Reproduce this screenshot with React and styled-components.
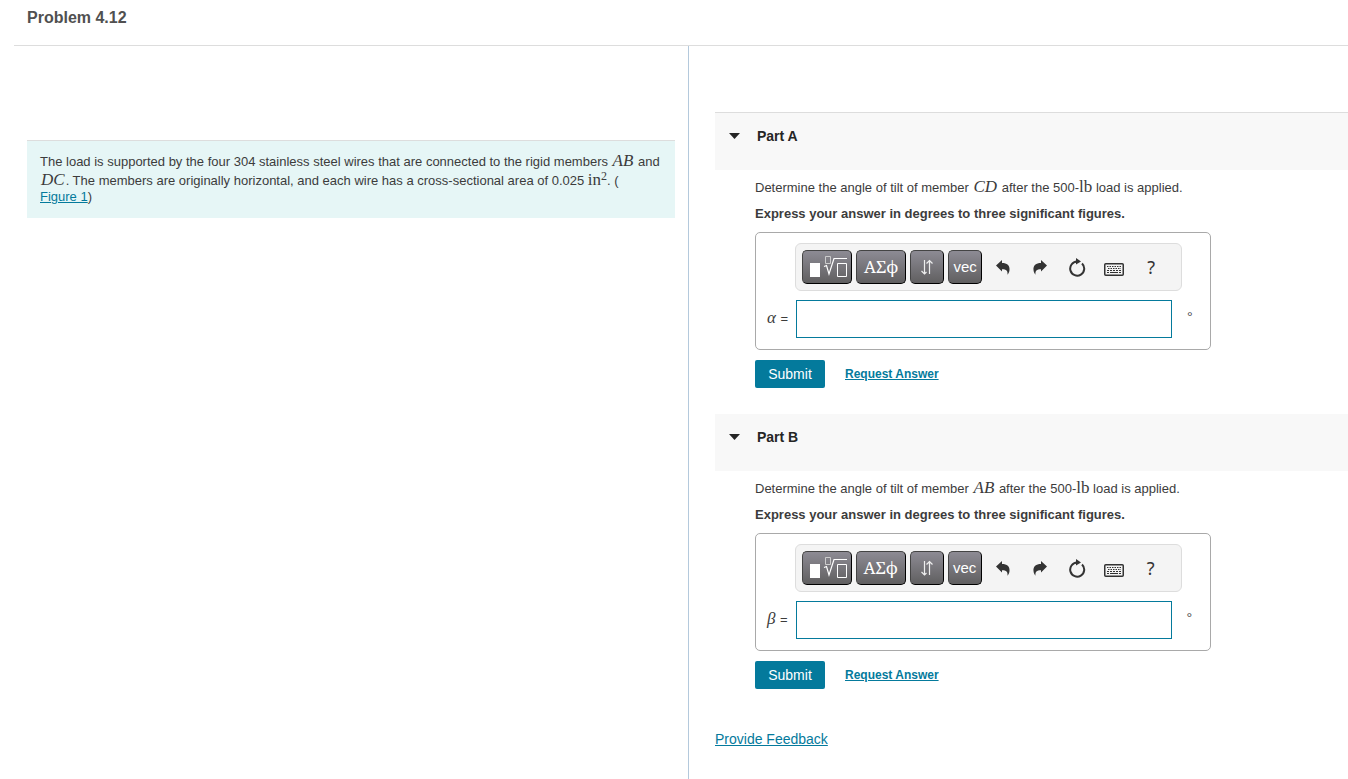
import React, { useState } from 'react';
import styled, { createGlobalStyle } from 'styled-components';

const GlobalStyle = createGlobalStyle`
  * {
    box-sizing: border-box;
  }
  body {
    margin: 0;
    background: #fff;
    color: #3c3c3c;
    font-family: "Liberation Sans", Arial, sans-serif;
    font-size: 13px;
    line-height: 16px;
  }
`;

const Page = styled.div`
  display: flex;
  flex-direction: column;
  min-height: 100vh;
`;

const Header = styled.header`
  margin-left: 14px;
  padding: 8px 13px 17px;
  border-bottom: 1px solid #ddd;
`;

const Title = styled.h1`
  margin: 0;
  color: #505050;
  font-size: 16px;
  line-height: 20px;
`;

const Columns = styled.main`
  flex: 1;
  display: grid;
  grid-template-columns: 689fr 659fr;
`;

const ProblemColumn = styled.section`
  padding: 94px 13px 0 27px;
  border-right: 1px solid #b4c9dc;
`;

const Statement = styled.p`
  margin: 0;
  padding: 10px 13px 13px;
  background: #e6f6f6;
  border-top: 1px solid #ddd;
`;

const AnswerColumn = styled.section`
  padding: 66px 0 20px 26px;
`;

const MathText = styled.span`
  padding: ${props => props.$upright ? '0' : '0 1px'};
  font-family: "Liberation Serif", "Times New Roman", serif;
  font-size: 17px;
  line-height: 19px;
  font-style: ${props => props.$upright ? 'normal' : 'italic'};

  sup {
    font-size: 12px;
    line-height: 0;
    vertical-align: 5px;
  }
`;

const TextLink = styled.a`
  color: #047a9c;
  text-decoration: underline;
  white-space: nowrap;
`;

const FeedbackLink = styled(TextLink)`
  display: inline-block;
  margin-top: 16px;
  font-size: 14px;
`;

const Part = styled.section`
  margin-bottom: 26px;
`;

const PartHeader = styled.h2`
  display: flex;
  align-items: flex-start;
  margin: 0;
  height: ${props => props.$first ? '58px' : '57px'};
  padding: 15px 14px;
  border-top: ${props => props.$first ? '1px solid #ddd' : 'none'};
  background: #f8f8f8;
  color: #252525;
  font-size: 14px;
`;

const PartToggle = styled.button`
  display: flex;
  align-items: center;
  gap: 17px;
  padding: 0;
  border: none;
  background: none;
  color: inherit;
  font: inherit;
  cursor: pointer;
`;

const PartBody = styled.div`
  padding: 7px 0 0 40px;
`;

const Question = styled.p`
  margin: 0 0 10px;
`;

const Instruction = styled.p`
  margin: 0 0 10px;
  font-weight: bold;
`;

const AnswerBox = styled.div`
  display: grid;
  grid-template-columns: auto 387px;
  gap: 9px 7px;
  align-items: center;
  width: fit-content;
  padding: 10px 28px 11px 10px;
  border: 1px solid #a9a9a9;
  border-radius: 5px;
`;

const Toolbar = styled.div`
  grid-column: 2;
  display: flex;
  align-items: center;
  gap: 4px;
  height: 48px;
  padding: 0 6px;
  background: #f4f4f4;
  border: 1px solid #ddd;
  border-radius: 6px;
`;

const ToolButton = styled.button`
  display: flex;
  align-items: center;
  justify-content: center;
  width: ${props => props.$wide ? '50px' : '34px'};
  height: 34px;
  padding: 0;
  border: 1px solid #000;
  border-top-color: #444;
  border-left-color: #444;
  border-radius: 5px;
  background: linear-gradient(#8d8b94, #605f60);
  color: #fff;
  font-family: ${props => props.$serif ? '"Noto Serif", "DejaVu Serif", serif' : '"Liberation Sans", Arial, sans-serif'};
  font-size: ${props => props.$serif ? '17px' : '15px'};
  line-height: 18px;
  cursor: pointer;
`;

const IconButtons = styled.div`
  display: flex;
  gap: 3px;
`;

const IconButton = styled.button`
  display: flex;
  align-items: center;
  justify-content: center;
  width: 34px;
  height: 34px;
  padding: 0;
  border: none;
  background: none;
  color: #333;
  font-family: "Noto Sans", sans-serif;
  font-size: 18px;
  cursor: pointer;
`;

const AnswerLabel = styled.label`
  padding-bottom: 4px;
  white-space: nowrap;
`;

const InputRow = styled.div`
  display: flex;
  align-items: flex-start;
  gap: 15px;
  padding-left: 1px;
`;

const AnswerInput = styled.input`
  flex: none;
  width: 376px;
  height: 38px;
  padding: 0 6px;
  border: 1px solid #047a9c;
  background: #fff;
  font: inherit;
  font-size: 16px;
`;

const Unit = styled.span`
  padding-top: 8px;
  font-family: "Liberation Serif", "Times New Roman", serif;
`;

const Actions = styled.div`
  display: flex;
  align-items: center;
  gap: 20px;
  margin-top: 10px;
`;

const SubmitButton = styled.button`
  width: 70px;
  height: 28px;
  padding: 0;
  border: none;
  border-radius: 2px;
  background: #047a9c;
  color: #fff;
  font: inherit;
  font-size: 14px;
  cursor: pointer;
`;

const RequestLink = styled(TextLink)`
  font-size: 12px;
  font-weight: bold;
`;

const CaretIcon = ({ open }) => (
  <svg width="11" height="6" viewBox="0 0 11 6" transform={open ? undefined : 'rotate(-90)'}>
    <path d="M0 0h11L5.500 6z" fill="currentColor" />
  </svg>
);

const TemplateIcon = () => (
  <svg width="40" height="26" viewBox="0 0 40 26" fill="none" stroke="#fff">
    <path d="M3 9h10v14H3z" fill="#fff" stroke="none" />
    <path d="M18.500 2.500h5v7h-5z" stroke="#ccc" />
    <path d="M17 12.500l2.500-1 2.500 8.500 5-15.500h13" strokeWidth="1.200" />
    <path d="M30.500 9.500h9v13h-9z" />
  </svg>
);

const ArrowsIcon = () => (
  <svg width="14" height="16" viewBox="0 0 14 16" fill="none" stroke="#eee">
    <path d="M4.500 1v14M1.500 12l3 3 2-2M9.500 15V1M6.500 4.500l3-3 3 3" strokeWidth="1.200" />
  </svg>
);

const ReplyIcon = ({ flip }) => (
  <svg width="14" height="15" viewBox="0 0 14 15">
    <path
      d="M0 5.500L6 0v3c5 0 8 2.500 7.500 7-.2 2-1 3.500-2 4.800.4-3.800-1-5.500-5.500-5.500V11.500z"
      fill="currentColor"
      transform={flip ? 'translate(14 0) scale(-1 1)' : undefined}
    />
  </svg>
);

const ResetIcon = () => (
  <svg width="18" height="19" viewBox="0 0 18 19">
    <path d="M14 5.500A7 7 0 1 1 9 3.600" fill="none" stroke="currentColor" strokeWidth="2" />
    <path d="M8 0l5 3.500L8 6.500z" fill="currentColor" />
  </svg>
);

const KeyboardIcon = () => (
  <svg width="20" height="17" viewBox="0 0 20 17" fill="none" stroke="currentColor">
    <rect x="0.750" y="4.750" width="18.500" height="11.500" rx="1" strokeWidth="1.500" />
    <path d="M3 7.500h14M4 9.500h13" strokeDasharray="1.500 1" />
    <path d="M3 11.500h14" strokeDasharray="2 1" />
    <path d="M3 13.500h2M6 13.500h8M15 13.500h2" />
  </svg>
);

const AnswerPart = ({ id, title, member, symbol, first }) => {
  const [open, setOpen] = useState(true);
  const [answer, setAnswer] = useState('');

  return (
    <Part>
      <PartHeader $first={first}>
        <PartToggle type="button" aria-expanded={open} onClick={() => setOpen(!open)}>
          <CaretIcon open={open} />
          {title}
        </PartToggle>
      </PartHeader>
      {open && (
        <PartBody>
          <Question>
            Determine the angle of tilt of member <MathText>{member}</MathText> after the 500-<MathText $upright>lb</MathText> load is applied.
          </Question>
          <Instruction>Express your answer in degrees to three significant figures.</Instruction>
          <AnswerBox>
            <Toolbar>
              <ToolButton type="button" $wide aria-label="Templates"><TemplateIcon /></ToolButton>
              <ToolButton type="button" $wide $serif>ΑΣϕ</ToolButton>
              <ToolButton type="button" aria-label="Arrows"><ArrowsIcon /></ToolButton>
              <ToolButton type="button">vec</ToolButton>
              <IconButtons>
                <IconButton type="button" aria-label="Undo"><ReplyIcon /></IconButton>
                <IconButton type="button" aria-label="Redo"><ReplyIcon flip /></IconButton>
                <IconButton type="button" aria-label="Reset"><ResetIcon /></IconButton>
                <IconButton type="button" aria-label="Keyboard"><KeyboardIcon /></IconButton>
                <IconButton type="button">?</IconButton>
              </IconButtons>
            </Toolbar>
            <AnswerLabel htmlFor={id}><MathText>{symbol}</MathText> =</AnswerLabel>
            <InputRow>
              <AnswerInput id={id} value={answer} onChange={e => setAnswer(e.target.value)} />
              <Unit>°</Unit>
            </InputRow>
          </AnswerBox>
          <Actions>
            <SubmitButton type="button">Submit</SubmitButton>
            <RequestLink href="#request">Request Answer</RequestLink>
          </Actions>
        </PartBody>
      )}
    </Part>
  );
};

const App = () => (
  <>
    <GlobalStyle />
    <Page>
      <Header>
        <Title>Problem 4.12</Title>
      </Header>
      <Columns>
        <ProblemColumn>
          <Statement>
            The load is supported by the four 304 stainless steel wires that are connected to the rigid members <MathText>AB</MathText> and <MathText>DC</MathText>. The members are originally horizontal, and each wire has a cross-sectional area of 0.025 <MathText $upright>in<sup>2</sup></MathText>. ( <TextLink href="#figure1">Figure 1</TextLink>)
          </Statement>
        </ProblemColumn>
        <AnswerColumn>
          <AnswerPart id="answer-a" title="Part A" member="CD" symbol="α" first />
          <AnswerPart id="answer-b" title="Part B" member="AB" symbol="β" />
          <FeedbackLink href="#feedback">Provide Feedback</FeedbackLink>
        </AnswerColumn>
      </Columns>
    </Page>
  </>
);

export default App;
